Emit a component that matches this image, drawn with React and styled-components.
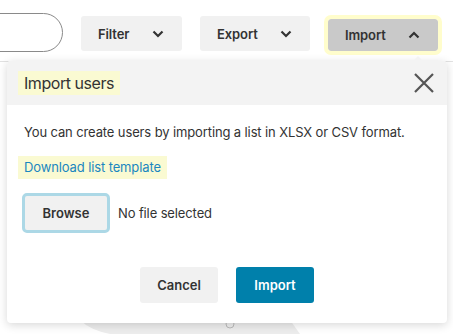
import React from 'react';
import styled, { createGlobalStyle, css } from 'styled-components';

const GlobalStyle = createGlobalStyle`
  html, body {
    margin: 0;
    padding: 0;
    background: #ffffff;
    font-family: Inter, 'Noto Sans', sans-serif;
    color: #333333;
  }
`;

const Page = styled.div`
  position: relative;
  width: 453px;
  height: 334px;
  overflow: hidden;
`;

const Toolbar = styled.div`
  display: flex;
  align-items: flex-start;
  gap: 18px;
  padding-top: 13px;
  height: 48px;
  border-bottom: 1px solid #e2e2e2;
`;

const Search = styled.div`
  width: 200px;
  height: 37px;
  margin-left: -139px;
  border: 1px solid #8a8a8a;
  border-radius: 20px;
`;

const ToolButton = styled.button`
  display: flex;
  align-items: center;
  justify-content: space-between;
  box-sizing: border-box;
  margin-top: 3px;
  width: ${p => p.$w}px;
  height: 35px;
  padding: 0 18px 0 17px;
  border: none;
  border-radius: 3px;
  background: #f1f1f1;
  font-family: inherit;
  font-size: 13px;
  font-weight: 600;
  letter-spacing: -0.1px;
  color: #333333;
  ${p =>
    p.$open &&
    css`
      margin-top: 6px;
      height: 32px;
      background: #c9c9c9;
      outline: 4px solid #fffdcc;
      outline-offset: 0;
    `}
`;

const Chevron = ({ up }) => (
  <svg width="12" height="8" viewBox="0 0 12 8">
    <path
      d={up ? 'M1.5 6.5 L6 2 L10.5 6.5' : 'M1.5 1.5 L6 6 L10.5 1.5'}
      fill="none"
      stroke="#333"
      strokeWidth="2.2"
    />
  </svg>
);

const Backdrop = styled.svg`
  position: absolute;
  left: 0;
  top: 300px;
`;

const Popover = styled.div`
  position: absolute;
  left: 7px;
  top: 61px;
  width: 440px;
  background: #ffffff;
  border-radius: 4px;
  box-shadow: 0 2px 10px rgba(0, 0, 0, 0.16);
  &::before {
    content: '';
    position: absolute;
    right: 24px;
    top: -5px;
    border-left: 5px solid transparent;
    border-right: 5px solid transparent;
    border-bottom: 5px solid #f3f3f3;
  }
`;

const Header = styled.div`
  display: flex;
  align-items: center;
  justify-content: space-between;
  height: 44px;
  padding: 0 13px 0 11px;
  background: #f3f3f3;
  border-radius: 4px 4px 0 0;
`;

const Title = styled.h2`
  margin: 0;
  padding: 2px 6px;
  background: #fafad2;
  font-size: 16px;
  font-weight: 400;
  letter-spacing: -0.45px;
  color: #333333;
`;

const CloseButton = styled.button`
  display: flex;
  padding: 0;
  border: none;
  background: none;
`;

const Body = styled.div`
  display: flex;
  flex-direction: column;
  align-items: flex-start;
  padding: 18px 15px 20px 11px;
`;

const Text = styled.p`
  margin: 0 0 15px 6px;
  font-size: 13px;
  line-height: 18px;
  letter-spacing: -0.12px;
`;

const Link = styled.a`
  padding: 3px 6px;
  background: #fafad2;
  font-size: 13px;
  line-height: 17px;
  letter-spacing: -0.12px;
  color: #1a87c0;
  text-decoration: none;
`;

const FileRow = styled.div`
  display: flex;
  align-items: center;
  gap: 8px;
  margin: 14px 0 0 4px;
`;

const Browse = styled.button`
  box-sizing: border-box;
  width: 88px;
  height: 40px;
  border: 3px solid #acd8e6;
  border-radius: 5px;
  background: #f1f1f1;
  font-family: inherit;
  font-size: 13px;
  font-weight: 600;
  color: #333333;
`;

const FileName = styled.span`
  font-size: 13px;
  letter-spacing: -0.12px;
`;

const Actions = styled.div`
  display: flex;
  justify-content: center;
  gap: 18px;
  align-self: stretch;
  margin: 34px 0 0 4px;
`;

const ActionButton = styled.button`
  width: 78px;
  height: 36px;
  border: none;
  border-radius: 3px;
  font-family: inherit;
  font-size: 13px;
  font-weight: 600;
  background: ${p => (p.$primary ? '#0080ab' : '#f1f1f1')};
  color: ${p => (p.$primary ? '#ffffff' : '#333333')};
`;

export default function App() {
  return (
    <Page>
      <GlobalStyle />
      <Toolbar>
        <Search />
        <ToolButton $w={101}>
          Filter <Chevron />
        </ToolButton>
        <ToolButton $w={110}>
          Export <Chevron />
        </ToolButton>
        <ToolButton $w={110} $open>
          Import <Chevron up />
        </ToolButton>
      </Toolbar>
      <Backdrop width="453" height="34" viewBox="0 0 453 34">
        <path d="M80 20 L290 20 L300 34 L110 34 Q90 30 80 20 Z" fill="#ededed" />
        <circle cx="230" cy="24" r="4" fill="none" stroke="#bbb" strokeWidth="1" />
      </Backdrop>
      <Popover>
        <Header>
          <Title>Import users</Title>
          <CloseButton aria-label="Close">
            <svg width="20" height="20" viewBox="0 0 20 20">
              <path d="M1 1 L19 19 M19 1 L1 19" stroke="#555" strokeWidth="2.2" />
            </svg>
          </CloseButton>
        </Header>
        <Body>
          <Text>You can create users by importing a list in XLSX or CSV format.</Text>
          <Link href="#">Download list template</Link>
          <FileRow>
            <Browse>Browse</Browse>
            <FileName>No file selected</FileName>
          </FileRow>
          <Actions>
            <ActionButton>Cancel</ActionButton>
            <ActionButton $primary>Import</ActionButton>
          </Actions>
        </Body>
      </Popover>
    </Page>
  );
}
